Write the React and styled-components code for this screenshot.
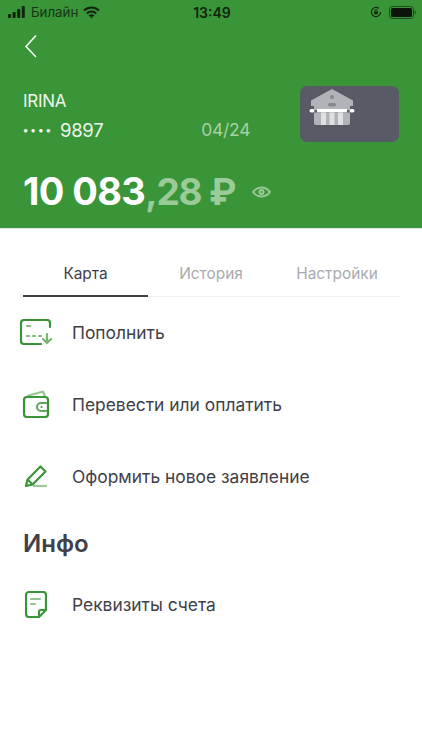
import styled, { createGlobalStyle } from "styled-components";

const GREEN = "#3a9438";
const INK = "#3f4048";

const Global = createGlobalStyle`
  html, body {
    margin: 0;
    padding: 0;
    background: #fff;
  }
  body {
    font-family: Inter, "Noto Sans", "Liberation Sans", sans-serif;
  }
`;

const Page = styled.div`
  width: 422px;
  height: 750px;
  overflow: hidden;
  background: #fff;
  color: ${INK};
`;

const Header = styled.header`
  height: 229px;
  background: ${GREEN};
  display: flex;
  flex-direction: column;
  box-sizing: border-box;
  border-bottom: 1px solid #e3e6e3;
`;

const StatusBar = styled.div`
  height: 24px;
  padding: 0 6px 0 8px;
  display: grid;
  grid-template-columns: 1fr auto 1fr;
  align-items: center;
  color: #11240f;
  font-size: 13px;
`;

const StatusLeft = styled.div`
  display: flex;
  align-items: center;
  gap: 4px;
`;

const StatusRight = styled.div`
  display: flex;
  align-items: center;
  justify-content: flex-end;
  gap: 7px;
`;

const Carrier = styled.span`
  font-size: 13.3px;
  margin: 0 1px;
  opacity: 0.85;
`;

const Clock = styled.span`
  font-size: 14px;
  font-weight: 600;
`;

const BackRow = styled.div`
  height: 44px;
  padding: 0 0 0 24px;
  display: flex;
  align-items: center;
`;

const CardRow = styled.div`
  display: flex;
  justify-content: space-between;
  padding: 18px 23px 0 23px;
  height: 81px;
  box-sizing: border-box;
`;

const CardInfo = styled.div`
  flex: 1;
  padding-top: 5px;
`;

const Holder = styled.div`
  color: #eef6ee;
  font-size: 17px;
  line-height: 20px;
  letter-spacing: -0.3px;
`;

const NumberRow = styled.div`
  display: flex;
  align-items: center;
  margin-top: 8px;
  color: #eef6ee;
  font-size: 18.5px;
  line-height: 22px;
  letter-spacing: -0.3px;
`;

const Dots = styled.span`
  width: 30px;
  font-size: 11px;
  font-weight: 700;
  letter-spacing: 2.4px;
  line-height: 14px;
  margin-right: 7px;
  white-space: nowrap;
`;

const Expiry = styled.span`
  margin-left: 98px;
  font-size: 17.5px;
  color: #a8d1a6;
`;

const BankCard = styled.div`
  width: 99px;
  height: 56px;
  border-radius: 7px;
  background: #585b65;
  padding: 3px 0 0 9px;
  box-sizing: border-box;
`;

const BalanceRow = styled.div`
  display: flex;
  align-items: center;
  padding: 19px 23px 0;
  height: 46px;
`;

const Whole = styled.span`
  color: #fff;
  font-size: 38px;
  font-weight: 700;
  letter-spacing: -0.6px;
`;

const Fraction = styled.span`
  color: #9ccb9a;
  font-size: 37px;
  font-weight: 700;
  letter-spacing: -1.2px;
`;

const EyeWrap = styled.span`
  display: flex;
  margin-left: 17px;
  margin-top: 1px;
`;

const Tabs = styled.nav`
  margin: 28px 22px 0 23px;
  display: grid;
  grid-template-columns: 125px 126px 1fr;
  border-bottom: 1px solid #eeeeef;
`;

const Tab = styled.div`
  height: 40px;
  display: flex;
  align-items: flex-start;
  justify-content: center;
  padding-top: 7px;
  box-sizing: border-box;
  font-size: 15.4px;
  line-height: 20px;
  color: ${(p) => (p.$active ? INK : "#a9aaae")};
  border-bottom: 2px solid ${(p) => (p.$active ? INK : "transparent")};
  margin-bottom: -1px;
`;

const ActionList = styled.div`
  display: flex;
  flex-direction: column;
  margin-top: ${(p) => p.$gap || 0}px;
`;

const Action = styled.div`
  height: 72px;
  padding-bottom: 2px;
  box-sizing: border-box;
  display: flex;
  align-items: center;
  font-size: 17.4px;
  color: ${INK};
`;

const IconSlot = styled.span`
  width: 72px;
  display: flex;
  justify-content: center;
  box-sizing: border-box;
`;

const Section = styled.h2`
  margin: 16px 0 0;
  padding: 0 23px;
  font-size: 24px;
  font-weight: 600;
  line-height: 30px;
  color: ${INK};
`;

const SignalIcon = () => (
  <svg width="18" height="12" viewBox="0 0 18 12" fill="#11240f">
    <rect x="0" y="8" width="3" height="4" rx="0.8" />
    <rect x="4.6" y="6" width="3" height="6" rx="0.8" />
    <rect x="9.2" y="3" width="3" height="9" rx="0.8" />
    <rect x="13.8" y="0" width="3" height="12" rx="0.8" />
  </svg>
);

const WifiIcon = () => (
  <svg width="17" height="13" viewBox="0 0 17 13" fill="none" stroke="#11240f" strokeWidth="2">
    <path d="M1 4.6C5.4 .6 11.6 .6 16 4.6" />
    <path d="M3.8 7.4c2.8-2.4 6.6-2.4 9.4 0" />
    <path d="M6.3 10c1.3-1 3.1-1 4.4 0" />
    <circle cx="8.5" cy="11.4" r="0.8" fill="#11240f" stroke="none" />
  </svg>
);

const LockIcon = () => (
  <svg width="12" height="12" viewBox="0 0 12 12" fill="none" stroke="#11240f">
    <path d="M10.6 6A4.6 4.6 0 1 1 8.9 2.4" strokeWidth="1.1" />
    <rect x="4.2" y="5.4" width="3.6" height="2.8" fill="#11240f" stroke="none" />
    <path d="M4.9 5.4V4.5a1.1 1.1 0 0 1 2.2 0v.9" strokeWidth="0.8" />
  </svg>
);

const BatteryIcon = () => (
  <svg width="27" height="13" viewBox="0 0 27 13">
    <rect x="0.5" y="0.5" width="24" height="12" rx="3" fill="none" stroke="#1f4a1d" />
    <rect x="2" y="2" width="21" height="9" rx="1.6" fill="#0c130b" />
    <path d="M25.6 4.5c.8.3 1.2 1 1.2 2s-.4 1.7-1.2 2z" fill="#1f4a1d" />
  </svg>
);

const BackIcon = () => (
  <svg width="14" height="24" viewBox="0 0 14 24" fill="none" stroke="#fff" strokeWidth="1.5">
    <path d="M12 1.5 2 12.5l10 10.5" />
  </svg>
);

const BankIcon = () => (
  <svg width="46" height="39" viewBox="0 0 46 39">
    <path d="M23 0 44 11.5V17H2v-5.5z" fill="#b1b3b8" />
    <rect x="5" y="17" width="36" height="4" fill="#b1b3b8" />
    <rect x="0.5" y="20" width="5" height="3.4" rx="1.7" fill="#fff" />
    <rect x="40.5" y="20" width="5" height="3.4" rx="1.7" fill="#fff" />
    <rect x="8" y="20" width="30" height="3.4" fill="#fff" />
    <path d="M5 23.4h36V34a2 2 0 0 1-2 2H7a2 2 0 0 1-2-2z" fill="#b1b3b8" />
    <rect x="12" y="23.4" width="5" height="12.6" fill="#dfe0e2" />
    <rect x="20.5" y="23.4" width="5" height="12.6" fill="#dfe0e2" />
    <rect x="29" y="23.4" width="5" height="12.6" fill="#dfe0e2" />
    <circle cx="23" cy="8" r="2" fill="#85878f" />
    <rect x="19" y="14" width="8" height="3.4" rx="1.7" fill="#85878f" />
  </svg>
);

const EyeIcon = () => (
  <svg width="19" height="12" viewBox="0 0 19 12" fill="none" stroke="#9ccb9a" strokeWidth="2">
    <path d="M1 6c4.6-6 12.4-6 17 0-4.6 6-12.4 6-17 0z" />
    <circle cx="9.5" cy="6" r="2" />
  </svg>
);

const TopUpIcon = () => (
  <svg width="34" height="26" viewBox="0 0 34 26" fill="none" stroke={GREEN} strokeWidth="2.2" strokeLinecap="round">
    <path d="M31 8V4a3 3 0 0 0-3-3H5a3 3 0 0 0-3 3v18a3 3 0 0 0 3 3h17" />
    <path d="M8 7h3" strokeOpacity="0.65" />
    <path d="M8 17h2M14 17h2M20 17h2" strokeOpacity="0.65" />
    <path d="M28 15v9M24 20l4 4 4-4" strokeOpacity="0.7" />
  </svg>
);

const WalletIcon = () => (
  <svg width="28" height="28" viewBox="0 0 28 28" fill="none" stroke={GREEN} strokeWidth="2.2" strokeLinejoin="round">
    <path d="M5 6 21 1.5l2 5" strokeOpacity="0.55" />
    <rect x="2" y="7" width="24" height="20" rx="3" />
    <path d="M26 13h-7a4 4 0 0 0 0 8h7" strokeOpacity="0.8" />
    <circle cx="19.5" cy="17" r="1" fill={GREEN} stroke="none" />
  </svg>
);

const PencilIcon = () => (
  <svg width="24" height="24" viewBox="0 0 24 24" fill="none" stroke={GREEN} strokeWidth="2.2" strokeLinejoin="round">
    <path d="M2 22 3.6 15.5 16.5 2.5l5 5L8.6 20.5z" />
    <path d="M3.6 15.5 8.6 20.5" />
    <path d="M9 22h14" strokeOpacity="0.5" />
  </svg>
);

const DocIcon = () => (
  <svg width="22" height="27" viewBox="0 0 22 27" fill="none" stroke={GREEN} strokeWidth="2.2" strokeLinejoin="round">
    <path d="M14 26H4a3 3 0 0 1-3-3V4a3 3 0 0 1 3-3h14a3 3 0 0 1 3 3v15z" />
    <path d="M14 26v-5a2 2 0 0 1 2-2h5" />
    <path d="M6 8h9M6 13h4" strokeOpacity="0.55" strokeLinecap="round" />
  </svg>
);

const actions = [
  { label: "Пополнить", icon: <TopUpIcon /> },
  { label: "Перевести или оплатить", icon: <WalletIcon /> },
  { label: "Оформить новое заявление", icon: <PencilIcon /> },
];

export default function App() {
  return (
    <Page>
      <Global />
      <Header>
        <StatusBar>
          <StatusLeft>
            <SignalIcon />
            <Carrier>Билайн</Carrier>
            <WifiIcon />
          </StatusLeft>
          <Clock>13:49</Clock>
          <StatusRight>
            <LockIcon />
            <BatteryIcon />
          </StatusRight>
        </StatusBar>
        <BackRow>
          <BackIcon />
        </BackRow>
        <CardRow>
          <CardInfo>
            <Holder>IRINA</Holder>
            <NumberRow>
              <Dots>••••</Dots>
              9897
              <Expiry>04/24</Expiry>
            </NumberRow>
          </CardInfo>
          <BankCard>
            <BankIcon />
          </BankCard>
        </CardRow>
        <BalanceRow>
          <Whole>10 083</Whole>
          <Fraction>,28 ₽</Fraction>
          <EyeWrap>
            <EyeIcon />
          </EyeWrap>
        </BalanceRow>
      </Header>
      <Tabs>
        <Tab $active>Карта</Tab>
        <Tab>История</Tab>
        <Tab>Настройки</Tab>
      </Tabs>
      <ActionList>
        {actions.map((a) => (
          <Action key={a.label}>
            <IconSlot>{a.icon}</IconSlot>
            {a.label}
          </Action>
        ))}
      </ActionList>
      <Section>Инфо</Section>
      <ActionList $gap={10}>
        <Action>
          <IconSlot>
            <DocIcon />
          </IconSlot>
          Реквизиты счета
        </Action>
      </ActionList>
    </Page>
  );
}
